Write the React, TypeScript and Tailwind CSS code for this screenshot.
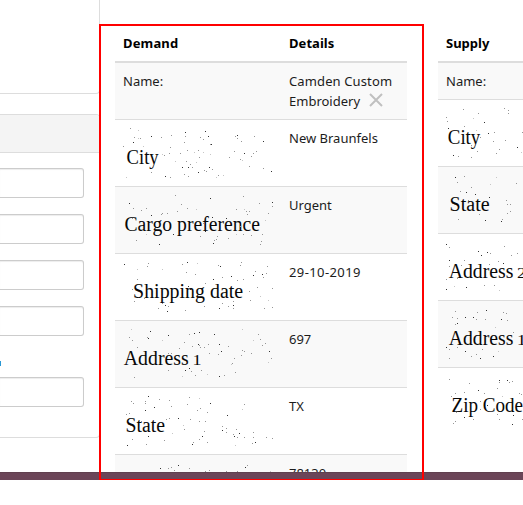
import React from "react";

type Dots = [number, number, number][];

type Label = {
  text: string;
  digit?: string;
  x: number;
  width: number;
  // Top-left of the dot list's own grid, which has three units per pixel.
  origin: [number, number];
  dots: Dots;
};

const SHADES = ["#c6c6c6", "#969696", "#333333"];

const cityDemand: Label = {
  text: "City", x: 3.6, width: 32, origin: [39, 24],
  dots: [[60,25,1],[84,30,0],[72,51,1],[85,54,0],[90,55,1],[70,67,2],[40,78,1],[124,49,2],[154,51,1],[183,45,1],[99,79,0],[226,38,2],[225,50,1],[222,67,1],[181,81,1],[178,99,1],[158,102,0],[162,107,1],[210,100,1],[231,90,1],[252,96,0],[266,91,1],[280,96,0],[286,34,2],[295,49,2],[270,51,1],[279,57,1],[300,73,1],[304,73,2],[301,103,0],[267,112,1],[259,127,0],[197,123,0],[228,124,1],[242,133,1],[248,141,1],[234,142,2],[218,141,2],[223,163,1],[234,168,1],[265,157,2],[283,151,1],[290,154,1],[298,142,2],[306,147,1],[324,165,1],[341,165,0],[318,171,0],[376,49,1],[382,46,2],[381,54,1],[393,64,1],[434,50,1],[460,64,2],[373,94,1],[359,112,1],[403,99,2],[431,99,1],[439,94,1],[424,109,1],[392,118,1],[398,120,0],[417,139,1],[460,144,1],[484,154,2],[125,157,1],[166,169,2],[182,171,1],[49,171,0]],
};
const cargo: Label = {
  text: "Cargo preference", x: 1.5, width: 135.5, origin: [39, 24],
  dots: [[58,49,2],[70,64,1],[94,69,1],[109,64,1],[125,84,2],[154,83,1],[158,79,1],[173,79,1],[196,26,1],[215,51,1],[202,72,1],[233,64,1],[260,67,0],[301,34,2],[307,90,2],[399,27,1],[378,67,1],[403,67,0],[410,73,1],[419,74,1],[411,81,1],[449,50,1],[487,46,2],[487,58,1],[476,79,1],[465,100,0],[350,94,2],[280,110,1],[270,148,1],[285,133,2],[321,148,1],[319,156,1],[313,160,1],[310,169,2],[354,154,1],[378,142,0],[399,141,1],[424,145,1],[458,142,1],[453,163,1],[450,171,1],[190,142,2],[148,171,2],[80,160,1],[109,142,0],[66,94,1],[390,117,1]],
};
const shipping: Label = {
  text: "Shipping date", x: 10.1, width: 110, origin: [39, 24],
  dots: [[42,30,2],[81,45,0],[115,28,1],[112,37,1],[156,47,0],[82,76,1],[67,106,1],[217,30,1],[232,25,2],[262,28,0],[228,54,1],[256,60,1],[325,34,1],[332,36,2],[395,25,1],[390,34,1],[338,70,1],[310,76,2],[364,67,2],[381,79,1],[400,76,1],[430,64,2],[435,51,1],[473,38,1],[468,57,1],[457,61,2],[461,69,1],[441,99,1],[486,103,1],[418,112,1],[421,139,1],[451,127,0],[474,138,0],[487,160,1],[463,163,1],[370,142,1],[370,154,2],[370,163,1],[354,156,1],[337,148,1],[328,163,2],[282,157,1],[225,169,1],[173,171,2],[174,157,1],[167,153,2],[158,148,1],[145,162,1],[102,133,1],[73,142,1],[236,97,2],[241,106,2],[286,88,1]],
};
const addressOne: Label = {
  text: "Address", digit: "1", x: 0.8, width: 65, origin: [39, 24],
  dots: [[63,25,0],[57,48,1],[68,58,1],[112,49,1],[115,52,2],[120,31,2],[174,43,2],[158,57,0],[81,79,1],[239,39,1],[253,37,2],[268,34,2],[313,40,2],[397,25,0],[223,64,1],[247,75,1],[264,70,2],[267,73,1],[271,79,1],[282,79,1],[295,69,1],[328,70,2],[355,75,1],[334,91,2],[325,100,1],[299,96,1],[208,82,1],[174,97,1],[184,97,1],[446,40,1],[451,54,1],[431,57,0],[465,67,1],[456,73,1],[478,91,2],[483,112,1],[474,124,0],[423,97,1],[397,87,1],[403,90,1],[393,103,1],[373,112,1],[368,126,1],[364,131,0],[376,153,1],[344,163,1],[328,166,2],[291,160,0],[275,148,1],[256,163,1],[245,151,1],[238,143,2],[227,148,2],[218,165,0],[175,149,1],[72,169,1]],
};
const stateDemand: Label = {
  text: "State", x: 2.5, width: 39.5, origin: [39, 24],
  dots: [[64,40,1],[70,46,1],[105,40,1],[105,45,1],[114,25,2],[148,33,1],[177,37,1],[133,57,2],[107,67,2],[183,54,1],[48,79,1],[57,76,1],[237,28,1],[267,30,0],[231,48,1],[301,45,2],[270,60,1],[262,66,1],[292,73,1],[168,93,1],[179,92,1],[204,91,2],[240,95,1],[267,99,1],[287,99,1],[219,111,0],[223,124,1],[187,135,0],[282,130,1],[277,145,2],[267,153,1],[292,163,1],[250,163,1],[248,169,2],[163,157,1],[108,168,1],[115,144,2],[66,153,1],[51,171,2],[402,49,1],[397,63,0],[352,82,2],[336,115,1],[337,127,2],[348,121,1],[349,133,1],[379,123,1],[387,136,2],[370,139,1],[373,144,2],[383,147,1],[404,148,1],[431,132,1],[431,148,1],[470,149,1],[487,150,1],[427,165,1],[437,163,2],[377,171,0],[93,99,1]],
};
const zipDemand: Label = {
  text: "", x: 0, width: 0, origin: [39, 225],
  dots: [[150,240,2],[175,240,1],[185,237,1],[204,231,2],[192,248,1],[237,240,1],[285,249,1],[297,246,1],[350,250,1],[383,249,1],[406,238,2],[411,233,1],[482,250,0]],
};
const citySupply: Label = {
  text: "City", x: 1.8, width: 32.5, origin: [138, 39],
  dots: [[190,43,1],[235,55,1],[219,69,0],[140,67,1],[142,78,1],[253,82,2],[193,94,1],[145,100,2],[228,105,0],[314,41,1],[324,46,1],[324,54,1],[266,115,2],[283,112,1],[241,127,1],[280,139,1],[315,136,1],[298,162,1],[289,174,1],[352,156,2],[366,111,1],[364,171,0],[231,168,1],[213,186,1],[175,185,1],[159,180,2],[214,150,1]],
};
const stateSupply: Label = {
  text: "State", x: 3.6, width: 40, origin: [138, 240],
  dots: [[166,247,2],[193,244,1],[172,261,1],[288,247,0],[272,268,0],[213,277,1],[350,265,1],[181,288,1],[199,291,2],[226,298,2],[268,307,2],[319,317,1],[322,327,1],[331,327,1],[331,349,1],[322,354,1],[307,373,1],[304,379,2],[257,376,2],[237,358,1],[175,373,1],[206,316,1]],
};
const addressTwo: Label = {
  text: "Address", digit: "2", x: 2.8, width: 64.5, origin: [138, 36],
  dots: [[140,43,2],[149,51,1],[313,48,1],[235,64,2],[244,76,2],[261,67,2],[271,70,1],[352,69,1],[334,76,1],[294,93,1],[148,91,2],[193,91,1],[183,105,1],[309,101,2],[268,103,1],[172,145,1],[140,149,1],[140,178,2],[163,170,0],[200,171,2],[253,166,1],[284,166,1],[297,180,0],[148,109,1]],
};
const addressOneSupply: Label = {
  text: "Address", digit: "1", x: 2.8, width: 64.5, origin: [138, 237],
  dots: [[165,244,1],[231,246,1],[259,241,2],[309,246,1],[320,249,1],[156,262,1],[171,266,1],[197,262,2],[220,262,2],[228,268,1],[256,268,1],[303,268,2],[321,270,1],[165,282,1],[173,280,2],[287,291,0],[340,307,1],[140,352,2],[149,357,1],[173,353,1],[196,364,2],[248,358,1],[296,364,0],[215,379,1],[228,373,1],[242,385,2],[279,379,2],[148,384,1]],
};
const zipSupply: Label = {
  text: "Zip Code", x: 5.6, width: 71.5, origin: [528, 33],
  dots: [[538,42,1],[599,55,1],[688,46,2],[688,51,1],[712,46,2],[718,52,1],[726,49,1],[682,69,1],[625,76,2],[557,85,1],[543,94,1],[583,82,1],[643,85,1],[697,93,0],[748,85,1],[754,87,1],[630,108,1],[630,133,1],[652,121,2],[682,147,1],[688,162,1],[730,151,2],[726,177,2],[757,163,1],[611,162,1],[584,156,2],[556,168,1],[550,175,1],[559,142,1]],
};

function NoisyLabel({ label }: { label: Label }) {
  const [ox, oy] = label.origin;
  return (
    <svg width="150" height="50" className="block max-w-none overflow-hidden font-['Liberation_Serif',serif]" fill="#080808">
      {label.text && (
        <text x={label.x} y="36" fontSize="20" textLength={label.width} lengthAdjust="spacingAndGlyphs">{label.text}</text>
      )}
      {label.digit && (
        <text x={label.x + label.width + 3.6} y="36" fontSize="15.5" textLength="9" lengthAdjust="spacingAndGlyphs">{label.digit}</text>
      )}
      {label.dots.map(([x, y, shade], i) => (
        <rect key={i} x={Math.floor((x - ox) / 3)} y={Math.floor((y - oy) / 3)} width="1" height="1" fill={SHADES[shade]} />
      ))}
    </svg>
  );
}

function Row({ label, detail, shaded, detailClass = "" }: { label: Label; detail?: string; shaded?: boolean; detailClass?: string }) {
  return (
    <div className={`flex h-[67px] shrink-0 border-t border-[#ddd] py-2 ${shaded ? "bg-[#f9f9f9]" : "bg-white"}`}>
      <div className="w-[166px] shrink-0 pl-2"><NoisyLabel label={label} /></div>
      <div className={`pl-2 ${detailClass}`}>{detail}</div>
    </div>
  );
}

function Input({ className = "" }: { className?: string }) {
  return <div className={`h-[30px] w-[84px] shrink-0 rounded-r-[3px] border border-l-0 border-[#ccc] bg-white shadow-[inset_0_1px_1px_rgba(0,0,0,0.075)] ${className}`} />;
}

export default function App() {
  return (
    <div className="relative h-[505px] w-[523px] overflow-hidden bg-white font-['Noto_Sans','Open_Sans',sans-serif] text-[13px] leading-5 text-[#1c1c1c]">
      <div className="flex h-[472px] overflow-hidden">
        <aside className="w-[100px] shrink-0">
          <div className="h-[94px] rounded-br border-r border-b border-[#ddd]" />
          <div className="mt-5 flex h-[324px] flex-col overflow-hidden rounded-r border border-l-0 border-[#ddd]">
            <div className="h-[38px] shrink-0 border-b border-[#ddd] bg-[#f4f4f4]" />
            <Input className="mt-[15px]" />
            <Input className="mt-4" />
            <Input className="mt-4" />
            <Input className="mt-4" />
            <div className="mt-[25px] h-[5px] w-px shrink-0 bg-[#2a98d4]" />
            <Input className="mt-[11px]" />
          </div>
        </aside>

        <section className="ml-[15px] w-[292px] shrink-0 pt-[25px]">
          <div className="flex h-[38px] border-b-2 border-[#ddd] pt-2 font-bold text-black">
            <div className="w-[166px] pl-2 tracking-[0.15px]">Demand</div>
            <div className="pl-2 tracking-[0.05px]">Details</div>
          </div>
          <div className="flex h-14 bg-[#f9f9f9] pt-2">
            <div className="w-[166px] shrink-0 pl-2">Name:</div>
            <div className="pl-2">
              <div className="tracking-[0.12px]">Camden Custom</div>
              <div className="flex items-start">
                Embroidery
                <svg width="14" height="14" className="mt-[2px] ml-[9px]" stroke="#c0c0c0" strokeWidth="2" fill="none">
                  <path d="M1 1 13 13M13 1 1 13" />
                </svg>
              </div>
            </div>
          </div>
          <Row label={cityDemand} detail="New Braunfels" />
          <Row label={cargo} detail="Urgent" shaded />
          <Row label={shipping} detail="29-10-2019" detailClass="tracking-[0.4px]" />
          <Row label={addressOne} detail="697" shaded />
          <Row label={stateDemand} detail="TX" />
          <Row label={zipDemand} detail="78130" shaded />
        </section>

        <section className="ml-[31px] w-[85px] shrink-0 overflow-hidden pt-[25px]">
          <div className="h-[38px] border-b-2 border-[#ddd] pt-2 pl-2 font-bold text-black">Supply</div>
          <div className="h-9 bg-[#f9f9f9] pt-2 pl-2">Name:</div>
          <Row label={citySupply} />
          <Row label={stateSupply} shaded />
          <Row label={addressTwo} />
          <Row label={addressOneSupply} shaded />
          <Row label={zipSupply} />
        </section>
      </div>
      <div className="h-2 border-t border-[#60404f] bg-[#6b4558]" />
      <div className="absolute top-6 left-[99px] h-[456px] w-[325px] border-2 border-b border-[#f00]" />
    </div>
  );
}
